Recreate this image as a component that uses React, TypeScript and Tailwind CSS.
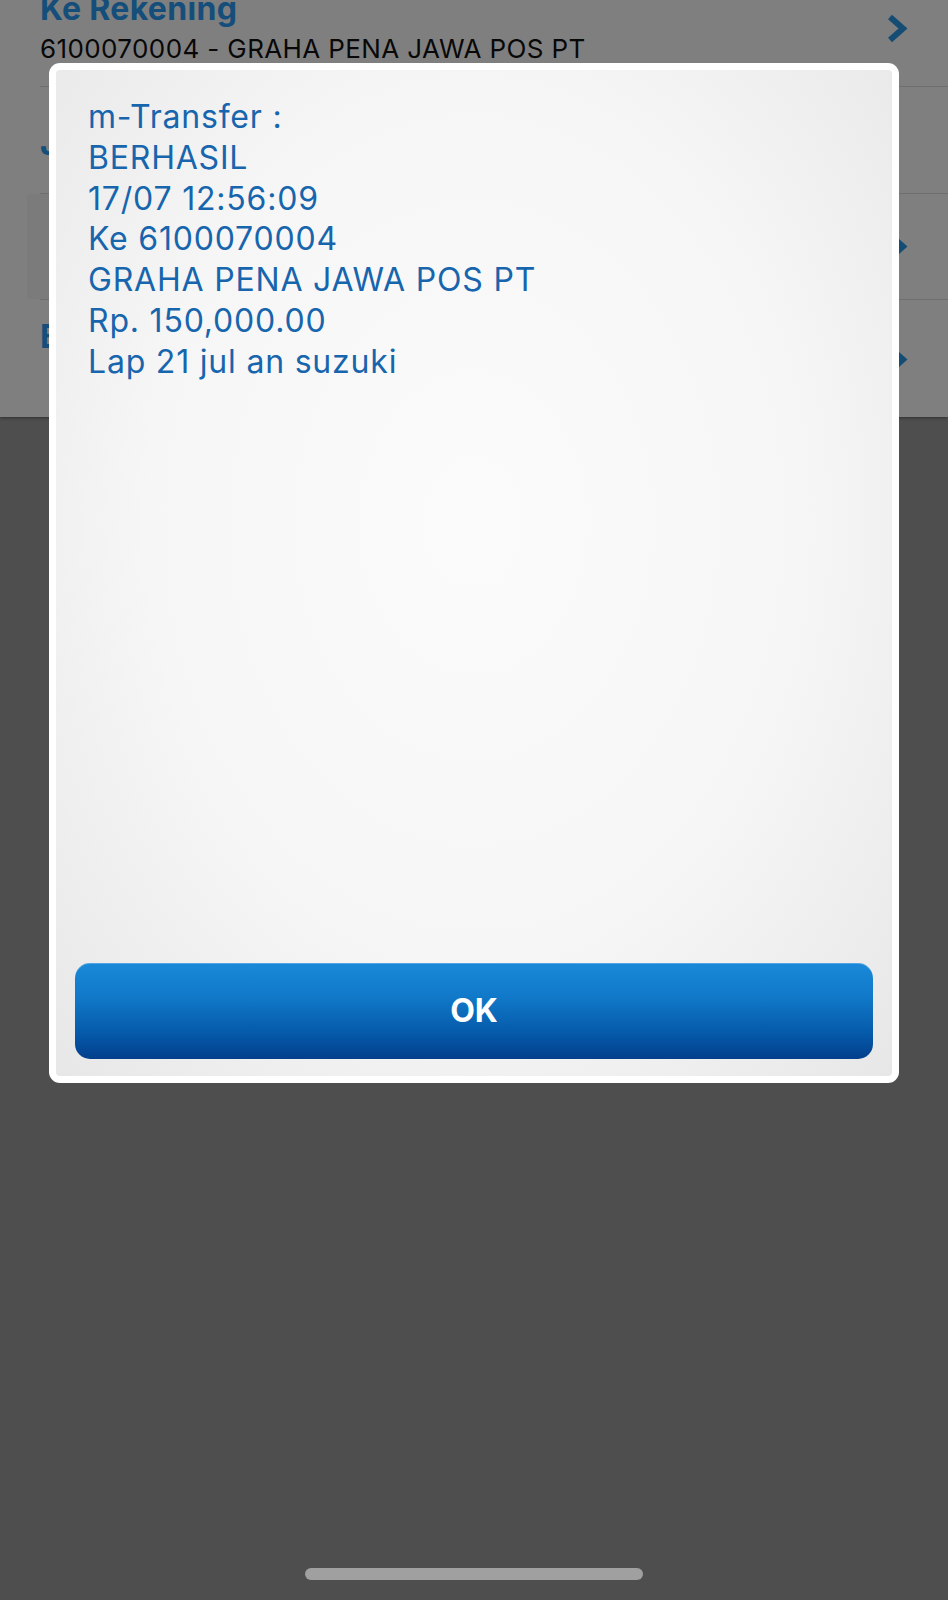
import React from "react";

const receipt = [
  "m-Transfer :",
  "BERHASIL",
  "17/07 12:56:09",
  "Ke 6100070004",
  "GRAHA PENA JAWA POS PT",
  "Rp. 150,000.00",
  "Lap 21 jul an suzuki",
];

function Chevron({ className = "" }: { className?: string }) {
  return (
    <svg
      width="22"
      height="29"
      viewBox="0 0 22 29"
      className={className}
      fill="none"
    >
      <polyline
        points="4,3 17,14.5 4,26"
        stroke="#2a98e8"
        strokeWidth="6"
        strokeLinejoin="miter"
      />
    </svg>
  );
}

export default function App() {
  return (
    <div className="relative h-[1600px] w-[948px] overflow-hidden bg-[#9c9c9c] font-[family-name:Inter,sans-serif]">
      {/* transfer form behind the dialog */}
      <div className="h-[417px] overflow-hidden bg-white shadow-[0_1px_3px_rgba(0,0,0,0.4)]">
        <div className="-mt-[10px] ml-[40px] flex items-start justify-between border-b border-[#dcdcdc] pb-[21px] pr-[40px]">
          <div className="flex flex-col gap-[5px]">
            <span className="text-[32px] font-bold leading-[38px] tracking-[0.01em] text-[#2a9df4]">
              Ke Rekening
            </span>
            <span className="text-[26px] leading-[32px] tracking-[0.015em] text-[#111]">
              6100070004 - GRAHA PENA JAWA POS PT
            </span>
          </div>
          <Chevron className="mt-[24px]" />
        </div>

        <div className="ml-[40px] h-[107px] border-b border-[#dcdcdc] pt-[38px]">
          <span className="text-[32px] font-bold leading-[38px] text-[#2a9df4]">
            Jumlah
          </span>
        </div>

        <div className="flex h-[105px] items-center pr-[40px]">
          <div className="ml-[27px] h-full w-[850px] rounded-[3px] bg-[#f6f6f6]" />
          <Chevron className="ml-auto" />
        </div>
        <div className="ml-[40px] h-px bg-[#dcdcdc]" />

        <div className="ml-[40px] flex items-start justify-between pr-[40px] pt-[18px]">
          <span className="text-[32px] font-bold leading-[38px] text-[#2a9df4]">
            Berita
          </span>
          <Chevron className="mt-[27px]" />
        </div>
      </div>

      <div className="absolute inset-0 bg-black/50" />

      {/* result dialog */}
      <div className="absolute left-[49px] top-[63px] flex h-[1020px] w-[850px] flex-col rounded-[11px] bg-white p-[7px]">
        <div className="flex flex-1 flex-col rounded-[4px] bg-[radial-gradient(ellipse_at_50%_45%,#fbfbfb_0%,#f6f6f6_55%,#e7e7e7_100%)]">
          <div className="flex flex-col pl-[32px] pt-[27px] text-[32px] leading-[40.8px] tracking-[0.025em] text-[#1765ad]">
            {receipt.map((line) => (
              <span key={line}>{line}</span>
            ))}
          </div>
          <button className="mx-[19px] mb-[17px] mt-auto flex h-[96px] items-center justify-center rounded-[15px] bg-[linear-gradient(to_bottom,#1a88d8_0%,#1179c9_35%,#0558a8_75%,#023f8c_100%)] text-[32px] font-bold text-white shadow-[inset_0_1px_0_rgba(255,255,255,0.25)]">
            OK
          </button>
        </div>
      </div>

      <div className="absolute bottom-[20px] left-1/2 h-[12px] w-[338px] -translate-x-1/2 rounded-full bg-[#a0a0a0]" />
    </div>
  );
}
